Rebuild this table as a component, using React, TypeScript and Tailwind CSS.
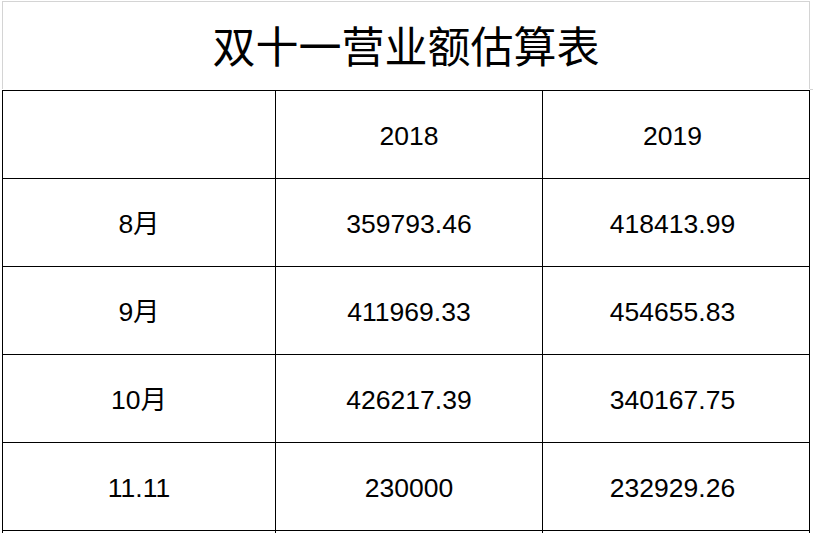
import React from 'react';

const rows = [
  { label: '', a: '2018', b: '2019' },
  { label: '8月', a: '359793.46', b: '418413.99' },
  { label: '9月', a: '411969.33', b: '454655.83' },
  { label: '10月', a: '426217.39', b: '340167.75' },
  { label: '11.11', a: '230000', b: '232929.26' },
  { label: '', a: '', b: '' },
];

const font = { fontFamily: '"Liberation Sans", "Noto Sans CJK SC", sans-serif' };

const App = () => {
  return (
    <div className="w-[813px] h-[533px] overflow-hidden bg-white text-black" style={font}>
      <div className="pt-[1px] flex">
        {/* Title cell (merged, gridlines only) */}
        <div className="ml-[2px] w-[808px] h-[88px] border-t border-l border-r border-[#d4d4d4] flex items-center justify-center">
          <span className="text-[43px] leading-none pb-[2px]" style={{ fontFamily: '"Noto Sans CJK SC", sans-serif' }}>
            双十一营业额估算表
          </span>
        </div>
        <div className="flex-1 mt-[88px] border-t border-[#d4d4d4]" />
      </div>

      {/* Table */}
      <div className="ml-[2px] w-[808px] grid grid-cols-[273px_267px_268px]">
        {rows.map((r, i) => (
          <React.Fragment key={i}>
            <div className="h-[88px] border-t border-l border-black flex items-center justify-center text-[26.5px] pt-[4px]">
              {r.label}
            </div>
            <div className="h-[88px] border-t border-l border-black flex items-center justify-center text-[26.5px] pt-[4px]">
              {r.a}
            </div>
            <div className="h-[88px] border-t border-l border-r border-black flex items-center justify-center text-[26.5px] pt-[4px] pr-[7px]">
              {r.b}
            </div>
          </React.Fragment>
        ))}
      </div>
    </div>
  );
};

export default App;
